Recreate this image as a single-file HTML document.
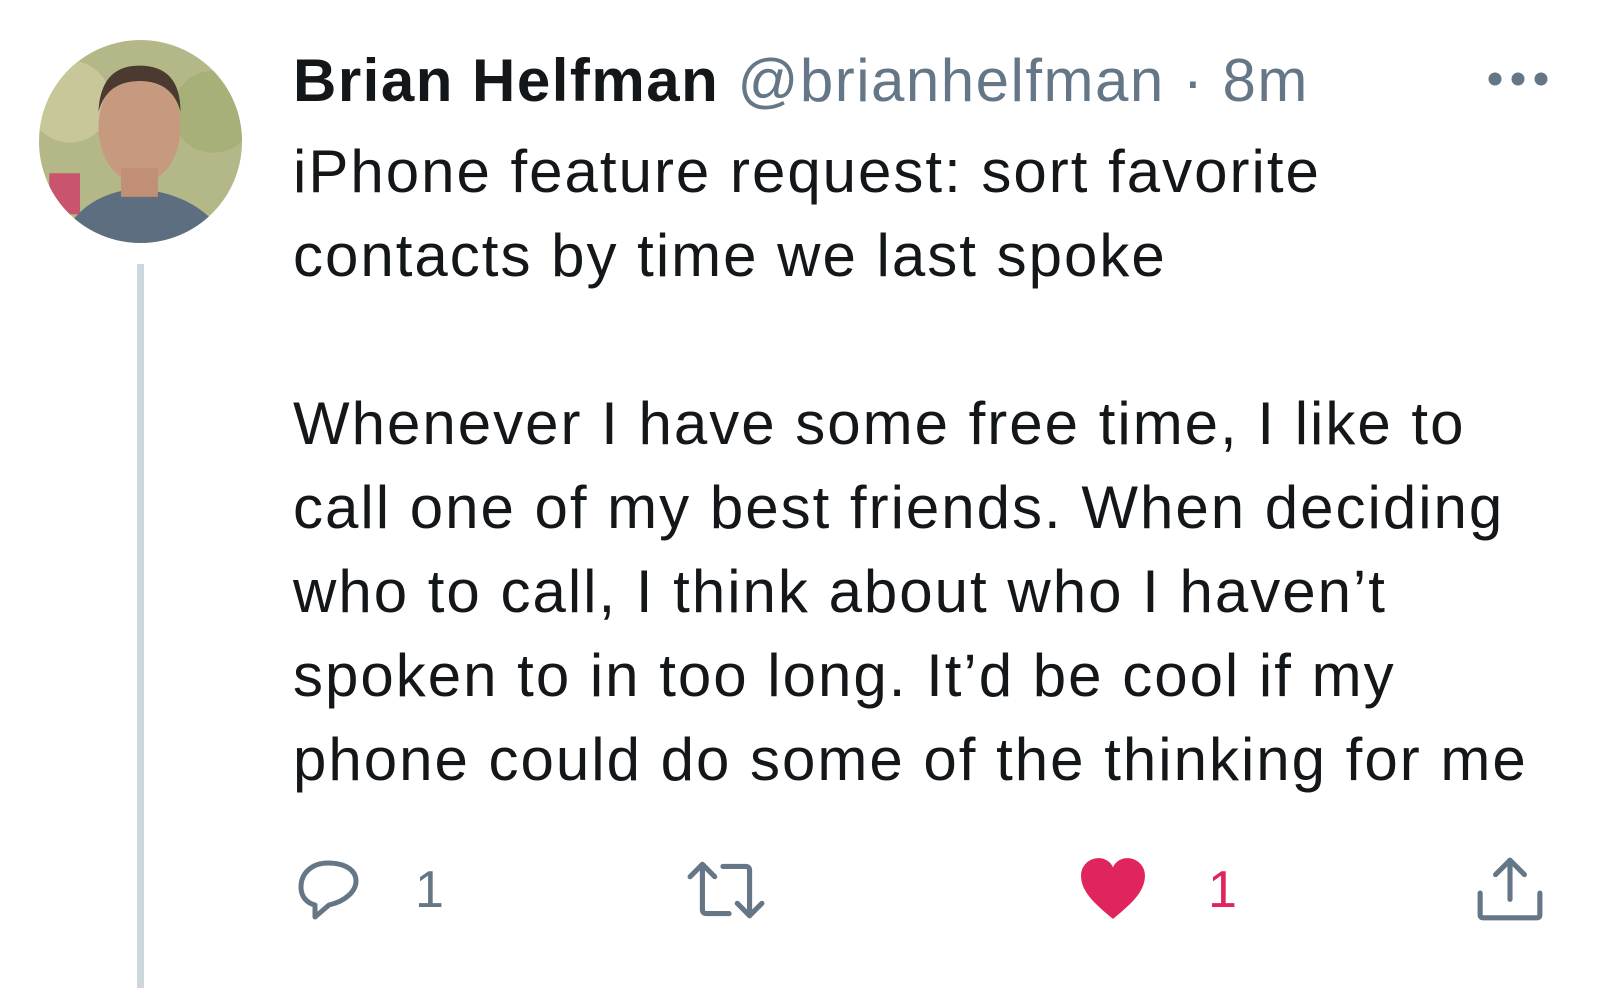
<!DOCTYPE html>
<html><head><meta charset="utf-8"><style>
html,body{margin:0;padding:0;background:#fff;width:1614px;height:982px;overflow:hidden;font-family:"Liberation Sans",Arial,sans-serif}
.av{position:absolute;left:39px;top:40px;width:203px;height:203px;border-radius:50%;overflow:hidden}
.line{position:absolute;left:137px;top:264px;width:7px;height:724px;background:#ccd6dd}
.hdr{position:absolute;left:293px;top:46px;font-size:60px;white-space:nowrap;line-height:70px;letter-spacing:1.5px}
.hdr b{color:#14171a}
.hdr span{color:#657786}
.body{position:absolute;left:293px;top:130px;font-size:60px;line-height:84px;color:#14171a;white-space:nowrap;letter-spacing:2px}
.cnt{position:absolute;top:861px;font-size:52px;line-height:58px}
</style></head><body>
<div class="av">
<svg width="203" height="203" viewBox="0 0 198 198">
<rect width="198" height="198" fill="#b4b888"/>
<circle cx="30" cy="60" r="40" fill="#c7c79a"/>
<circle cx="170" cy="70" r="40" fill="#a8b07a"/>
<rect x="10" y="130" width="30" height="40" fill="#c8546e"/>
<path d="M20 198 Q40 150 95 145 Q160 150 185 198Z" fill="#5c6e80"/>
<ellipse cx="98" cy="85" rx="40" ry="55" fill="#c79a80"/>
<path d="M58 70 Q60 25 98 25 Q138 25 138 70 Q130 40 98 40 Q66 40 58 70Z" fill="#4a3a30"/>
<rect x="80" y="125" width="36" height="28" fill="#c08f76"/>
</svg></div>
<div class="line"></div>
<div class="hdr"><b>Brian Helfman</b> <span>@brianhelfman · 8m</span></div>
<svg style="position:absolute;left:1486px;top:69px" width="64" height="20"><circle cx="9" cy="10" r="6.5" fill="#657786"/><circle cx="32" cy="10" r="6.5" fill="#657786"/><circle cx="55" cy="10" r="6.5" fill="#657786"/></svg>
<div class="body">iPhone feature request: sort favorite<br>contacts by time we last spoke<br><br>Whenever I have some free time, I like to<br>call one of my best friends. When deciding<br>who to call, I think about who I haven’t<br>spoken to in too long. It’d be cool if my<br>phone could do some of the thinking for me</div>
<svg style="position:absolute;left:294px;top:858px" width="70" height="64" viewBox="0 0 70 62"><path d="M34 4 C18 4 7 14 7 28 C7 38 13 44 21 46 L21 58 L35 46 C52 42 62 32 62 22 C62 11 51 4 34 4Z" fill="none" stroke="#657786" stroke-width="5" stroke-linejoin="round"/></svg>
<div class="cnt" style="left:415px;color:#657786">1</div>
<svg style="position:absolute;left:686px;top:858px" width="80" height="64" viewBox="0 0 78 62"><g fill="none" stroke="#657786" stroke-width="5" stroke-linecap="round" stroke-linejoin="round"><path d="M16 6 L16 50 Q16 54 20 54 L42 54"/><path d="M4 18 L16 6 L28 18"/><path d="M36 8 L58 8 Q62 8 62 12 L62 56"/><path d="M50 44 L62 56 L74 44"/></g></svg>
<svg style="position:absolute;left:1079px;top:857px" width="68" height="64" viewBox="0 0 66 62"><path d="M33 60 C16 46 2 34 2 18 C2 8 10 1 19 1 C26 1 31 5 33 10 C35 5 40 1 47 1 C56 1 64 8 64 18 C64 34 50 46 33 60Z" fill="#e0245e"/></svg>
<div class="cnt" style="left:1208px;color:#e0245e">1</div>
<svg style="position:absolute;left:1475px;top:856px" width="70" height="66" viewBox="0 0 68 64"><g fill="none" stroke="#657786" stroke-width="5" stroke-linecap="round" stroke-linejoin="round"><path d="M34 4 L34 42"/><path d="M20 18 L34 4 L48 18"/><path d="M5 36 L5 57 Q5 60 8 60 L60 60 Q63 60 63 57 L63 36"/></g></svg>
</body></html>
